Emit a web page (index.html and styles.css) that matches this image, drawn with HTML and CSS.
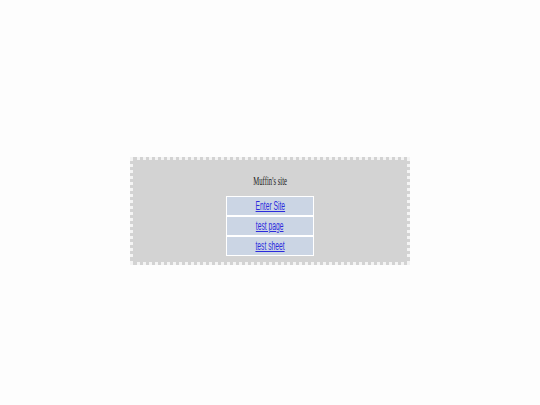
FILE: index.html
```html
<!DOCTYPE html>
<html>
<head>
<meta charset="utf-8">
<link rel="stylesheet" href="styles.css">
</head>
<body>
<div class="box">
  <div class="title"><span class="squeeze">Muffin's site</span></div>
  <div class="menu">
    <div class="item"><a href="#" class="squeeze">Enter Site</a></div>
    <div class="item"><a href="#" class="squeeze">test page</a></div>
    <div class="item"><a href="#" class="squeeze">test sheet</a></div>
  </div>
</div>
</body>
</html>
```
FILE: styles.css
```css
html, body {
  margin: 0;
  padding: 0;
  background: #fdfdfd;
}
.box {
  box-sizing: border-box;
  width: 280px;
  height: 108px;
  margin: 157px 0 0 130px;
  background: #d3d3d3;
  border: 3px dotted #f4f4f4;
  padding-top: 14px;
}
.title {
  font-family: "Liberation Serif", serif;
  font-size: 12px;
  line-height: 15px;
  color: #222;
  text-align: center;
  height: 22px;
}
.squeeze {
  display: inline-block;
  transform: scaleX(0.56);
}
.menu {
  width: 86px;
  margin: 0 0 0 93px;
  background: #ffffff;
  border: 1px solid #ffffff;
  display: flex;
  flex-direction: column;
  gap: 2px;
}
.item {
  height: 18px;
  background: #cbd5e4;
  text-align: center;
  font-family: "Liberation Sans", sans-serif;
  font-size: 12px;
  line-height: 18px;
}
.item a {
  color: #2a2add;
  text-decoration: underline;
}
```
